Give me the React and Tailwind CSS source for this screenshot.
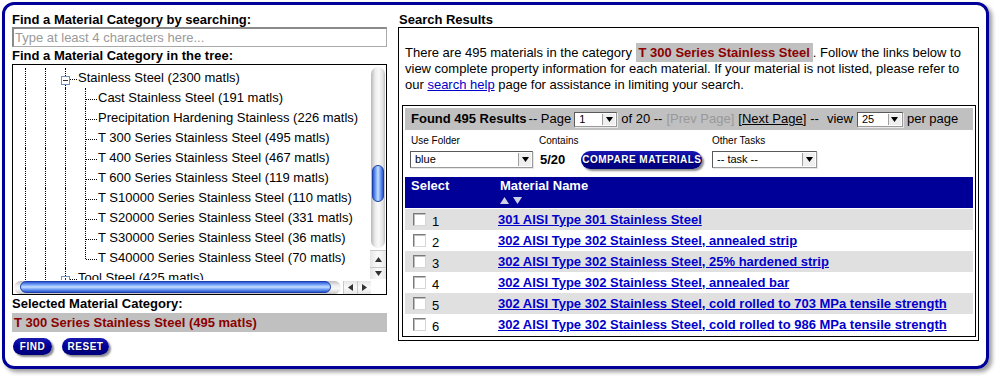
import React from "react";

const FONT = "font-['Liberation_Sans',Arial,Helvetica,sans-serif]";

function VLine({ half }) {
  return (
    <div className="w-5 h-5 shrink-0 flex">
      <div className="w-[10px] shrink-0" />
      <div className={half ? "h-[10px] border-l border-dotted border-black" : "h-full border-l border-dotted border-black"} />
    </div>
  );
}

function Tee({ last }) {
  return (
    <div className="w-5 h-5 shrink-0 flex">
      <div className="w-[10px] shrink-0" />
      <div className={last ? "h-[11px] border-l border-dotted border-black" : "h-full border-l border-dotted border-black"} />
      <div className="flex-1 mt-[11px] mr-[-2px] h-0 border-t border-dotted border-black" />
    </div>
  );
}

function Exp({ minus }) {
  return (
    <div className="w-5 h-5 shrink-0 relative">
      <div className="absolute left-[10px] top-0 bottom-0 border-l border-dotted border-black" />
      <div className="absolute left-[15px] right-[-2px] top-[11px] border-t border-dotted border-black" />
      <div className="absolute left-[6px] top-[8px] w-[9px] h-[9px] bg-white border border-[#6f93bd] flex items-center justify-center">
        <div className="w-[5px] h-px bg-[#333]" />
        {!minus && <div className="absolute w-px h-[5px] bg-[#333]" />}
      </div>
    </div>
  );
}

const children = [
  "Cast Stainless Steel (191 matls)",
  "Precipitation Hardening Stainless (226 matls)",
  "T 300 Series Stainless Steel (495 matls)",
  "T 400 Series Stainless Steel (467 matls)",
  "T 600 Series Stainless Steel (119 matls)",
  "T S10000 Series Stainless Steel (110 matls)",
  "T S20000 Series Stainless Steel (331 matls)",
  "T S30000 Series Stainless Steel (36 matls)",
  "T S40000 Series Stainless Steel (70 matls)",
];

function Tree() {
  return (
    <div className="h-[231px] border border-black flex flex-col bg-white">
      <div className="h-[215px] flex">
        <div className="flex-1 overflow-hidden pl-[2px] pt-[3px]">
          <div className="flex h-5 items-center">
            <VLine />
            <VLine />
            <Exp minus />
            <span className="ml-[3px] whitespace-nowrap">Stainless Steel (2300 matls)</span>
          </div>
          {children.map((c, i) => (
            <div key={c} className="flex h-5 items-center">
              <VLine />
              <VLine />
              <VLine />
              <Tee last={i === children.length - 1} />
              <span className="ml-[3px] whitespace-nowrap">{c}</span>
            </div>
          ))}
          <div className="flex h-5 items-center">
            <VLine />
            <VLine />
            <Exp />
            <span className="ml-[3px] whitespace-nowrap">Tool Steel (425 matls)</span>
          </div>
        </div>
        {/* vertical scrollbar */}
        <div className="w-[16px] shrink-0 flex flex-col bg-white pt-[2px]">
          <div className="mx-[1px] h-[181px] rounded-full bg-[linear-gradient(to_right,#b9b9b9,#ececec_30%,#fafafa_55%,#e2e2e2_85%,#bdbdbd)] flex flex-col items-center pt-[98px]">
            <div className="w-[12px] h-[37px] rounded-full border border-[#1d3fa8] bg-[linear-gradient(to_right,#2a57d6,#8fb9ff_35%,#c9e0ff_50%,#7aa8f7_70%,#2a55cc)]" />
          </div>
          <div className="mt-[2px] h-[17px] flex items-center justify-center border-t border-[#c8c8c8] bg-[linear-gradient(to_right,#e6e6e6,#fbfbfb,#e6e6e6)]">
            <svg width="7" height="5" viewBox="0 0 7 5"><path d="M3.5 0L7 5H0z" fill="#333" /></svg>
          </div>
          <div className="h-[12px] flex items-center justify-center border-t border-[#c8c8c8] bg-[linear-gradient(to_right,#e6e6e6,#fbfbfb,#e6e6e6)]">
            <svg width="7" height="5" viewBox="0 0 7 5"><path d="M0 0H7L3.5 5z" fill="#333" /></svg>
          </div>
        </div>
      </div>
      <div className="h-[14px] flex bg-white">
        <div className="flex-1 flex items-center">
          <div className="ml-[1px] w-[327px] h-[13px] rounded-full bg-[linear-gradient(to_bottom,#bdbdbd,#efefef_35%,#f8f8f8_60%,#c6c6c6)] flex items-center pl-[6px]">
            <div className="w-[311px] h-[12px] rounded-full border border-[#1d3fa8] bg-[linear-gradient(to_bottom,#2a57d6,#8fb9ff_35%,#c9e0ff_50%,#7aa8f7_70%,#2a55cc)]" />
          </div>
          <div className="ml-[2px] w-[14px] h-[13px] flex items-center justify-center border-l border-[#c8c8c8] bg-[linear-gradient(to_bottom,#e6e6e6,#fbfbfb,#e6e6e6)]">
            <svg width="5" height="7" viewBox="0 0 5 7"><path d="M0 3.5L5 0V7z" fill="#333" /></svg>
          </div>
          <div className="w-[14px] h-[13px] flex items-center justify-center border-l border-[#c8c8c8] bg-[linear-gradient(to_bottom,#e6e6e6,#fbfbfb,#e6e6e6)]">
            <svg width="5" height="7" viewBox="0 0 5 7"><path d="M5 3.5L0 0V7z" fill="#333" /></svg>
          </div>
        </div>
        <div className="w-[16px] shrink-0" />
      </div>
    </div>
  );
}

function Pill({ children, className }) {
  return (
    <div className={"h-[17px] rounded-full bg-[linear-gradient(to_bottom,#1a1ab0,#000099_50%,#00007a)] shadow-[2px_2px_2px_rgba(0,0,0,0.45)] flex items-center justify-center text-white text-[10px] font-black tracking-[0.5px] leading-none font-['Liberation_Sans_Narrow','Liberation_Sans',Arial,sans-serif] [text-shadow:1px_1px_0_rgba(0,0,40,0.6)] " + className}>
      {children}
    </div>
  );
}

function Sel({ className, value, text }) {
  return (
    <div className={"flex bg-white border border-[#9a9a9a] border-t-[#5a5a5a] border-l-[#5a5a5a] shadow-[1px_1px_0_#e8e8e8] " + className}>
      <div className={"flex-1 flex items-center pl-[4px] leading-none " + text}>{value}</div>
      <div className="w-[13px] my-[1px] mr-[1px] border-l border-[#a0a0a0] bg-[#efefef] flex items-center justify-center">
        <svg width="7" height="5" viewBox="0 0 7 5"><path d="M0 0H7L3.5 5z" fill="#000" /></svg>
      </div>
    </div>
  );
}

function Checkbox() {
  return <div className="w-[13px] h-[13px] bg-white border border-t-[#7a7a7a] border-l-[#7a7a7a] border-r-[#d6d6d6] border-b-[#d6d6d6] shadow-[inset_1px_1px_0_#bdbdbd]" />;
}

const rows = [
  "301 AISI Type 301 Stainless Steel",
  "302 AISI Type 302 Stainless Steel, annealed strip",
  "302 AISI Type 302 Stainless Steel, 25% hardened strip",
  "302 AISI Type 302 Stainless Steel, annealed bar",
  "302 AISI Type 302 Stainless Steel, cold rolled to 703 MPa tensile strength",
  "302 AISI Type 302 Stainless Steel, cold rolled to 986 MPa tensile strength",
];

function Left() {
  return (
    <div className="w-[375px] shrink-0 flex flex-col">
      <div className="h-[15px] font-bold leading-[15px]">Find a Material Category by searching:</div>
      <div className="h-[20px] border border-[#a9a9a9] border-t-2 border-l-2 border-t-[#8a8a8a] border-l-[#8a8a8a] text-[#9a9a9a] flex items-center pl-[1px] leading-none">
        Type at least 4 characters here...
      </div>
      <div className="h-[17px] font-bold leading-[17px]">Find a Material Category in the tree:</div>
      <Tree />
      <div className="h-[18px] font-bold leading-[18px]">Selected Material Category:</div>
      <div className="h-[19px] bg-[#c0c0c0] text-[#8b0000] font-bold flex items-center pl-[2px]">
        T 300 Series Stainless Steel (495 matls)
      </div>
      <div className="flex gap-[10px] mt-[6px] pl-[1px]">
        <Pill className="w-[39px]">FIND</Pill>
        <Pill className="w-[47px]">RESET</Pill>
      </div>
    </div>
  );
}

function Right() {
  return (
    <div className="w-[581px] shrink-0 flex flex-col">
      <div className="h-[15px] font-bold leading-[15px] pl-[1px]">Search Results</div>
      <div className="h-[314px] border border-black flex flex-col">
        <div className="pt-[17px] pl-[6px] leading-4 whitespace-nowrap">
          There are 495 materials in the category{" "}
          <span className="bg-[#c0c0c0] text-[#8b0000] font-bold px-[3px] py-[2px]">T 300 Series Stainless Steel</span>. Follow the links below to
          <br />
          view complete property information for each material. If your material is not listed, please refer to
          <br />
          our <span className="text-[#0000cc] underline">search help</span> page for assistance in limiting your search.
        </div>
        <div className="mt-[12px] ml-[3px] w-[574px] h-[232px] border border-black px-[2px] pt-[2px] flex flex-col">
          <div className="h-[22px] bg-[#c0c0c0] flex items-center pl-[6px] whitespace-nowrap">
            <span className="font-bold">Found 495 Results</span>
            <span className="ml-[2px]">-- Page</span>
            <Sel className="ml-[3px] w-[43px] h-[15px]" value="1" text="text-[11px]" />
            <span className="ml-[4px]">of 20 --</span>
            <span className="ml-[4px] text-[#999999]">[Prev Page]</span>
            <span className="ml-[4px] underline">[Next Page]</span>
            <span className="ml-[4px]">--</span>
            <span className="ml-[8px]">view</span>
            <Sel className="ml-[4px] w-[46px] h-[15px]" value="25" text="text-[11px]" />
            <span className="ml-[4px]">per page</span>
          </div>
          <div className="h-[45px] mt-[2px] grid grid-cols-[128px_173px_1fr] pl-[4px]">
            <div className="flex flex-col">
              <div className="text-[10px] leading-[10px] mt-[4px] pl-[2px]">Use Folder</div>
              <Sel className="mt-[5px] ml-[1px] w-[123px] h-[17px]" value="blue" text="text-[11px]" />
            </div>
            <div className="flex flex-col">
              <div className="text-[10px] leading-[10px] mt-[4px] pl-[2px]">Contains</div>
              <div className="flex items-center mt-[5px] h-[18px]">
                <span className="font-bold ml-[3px]">5/20</span>
                <Pill className="ml-[16px] w-[121px] h-[18px]">COMPARE MATERIALS</Pill>
              </div>
            </div>
            <div className="flex flex-col">
              <div className="text-[10px] leading-[10px] mt-[4px] pl-[2px]">Other Tasks</div>
              <Sel className="mt-[5px] ml-[2px] w-[105px] h-[17px]" value="-- task --" text="text-[11px]" />
            </div>
          </div>
          <div className="h-[31px] bg-[#000099] text-white font-bold flex">
            <div className="w-[93px] pl-[6px] pt-[1px] leading-4">Select</div>
            <div className="pl-[2px] pt-[1px] flex flex-col">
              <span className="leading-4">Material Name</span>
              <div className="flex gap-[4px] mt-[3px]">
                <svg width="9" height="7" viewBox="0 0 9 7"><path d="M4.5 0L9 7H0z" fill="#cfcfe6" /></svg>
                <svg width="9" height="7" viewBox="0 0 9 7"><path d="M0 0H9L4.5 7z" fill="#cfcfe6" /></svg>
              </div>
            </div>
          </div>
          <div className="mt-[1px] flex flex-col">
            {rows.map((r, i) => (
              <div key={i} className={i % 2 === 0 ? "h-[21px] bg-[#e0e0e0] flex items-center" : "h-[21px] bg-white flex items-center"}>
                <div className="w-[93px] flex items-center pl-[8px]">
                  <Checkbox />
                  <span className="ml-[6px] mt-[5px] leading-4">{i + 1}</span>
                </div>
                <span className="text-[#0000cc] underline font-bold">{r}</span>
              </div>
            ))}
          </div>
        </div>
      </div>
    </div>
  );
}

export default function App() {
  return (
    <div className={"w-[997px] h-[379px] bg-white text-[13px] text-black leading-4 overflow-hidden " + FONT}>
      <div className="ml-[2px] mt-[2px] w-[987px] h-[367px] border-[3px] border-[#000099] rounded-[12px] shadow-[3px_3px_4px_rgba(0,0,0,0.4)] flex gap-[11px] pl-[7px] pt-[7px]">
        <Left />
        <Right />
      </div>
    </div>
  );
}
